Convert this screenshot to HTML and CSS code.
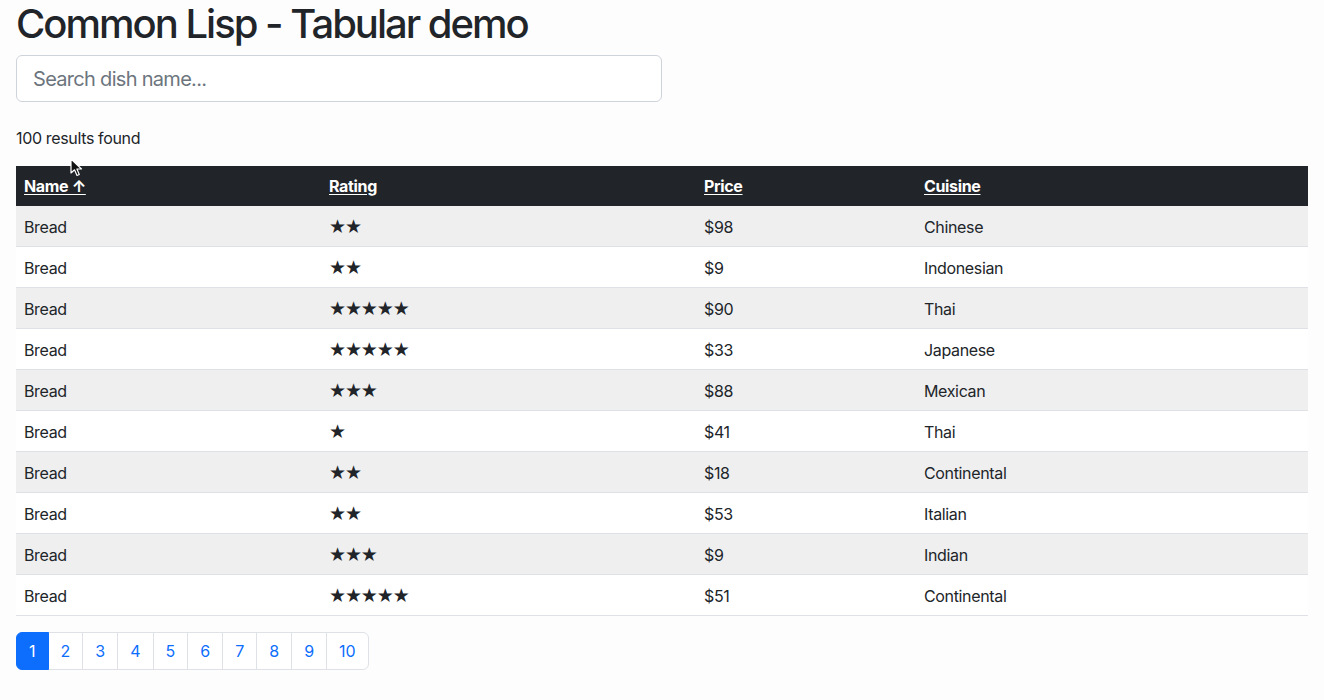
FILE: index.html
```html
<!DOCTYPE html>
<html lang="en">
<head>
<meta charset="utf-8">
<title>Common Lisp - Tabular demo</title>
<link rel="stylesheet" href="styles.css">
</head>
<body>
<div class="container">
  <h1 class="title">Common Lisp - Tabular demo</h1>
  <div class="search-row">
    <input class="search" type="text" placeholder="Search dish name...">
  </div>
  <p class="count">100 results found</p>
  <table class="table">
    <thead>
      <tr>
        <th class="c-name"><a href="#">Name ↑</a></th>
        <th class="c-rating"><a href="#">Rating</a></th>
        <th class="c-price"><a href="#">Price</a></th>
        <th class="c-cuisine"><a href="#">Cuisine</a></th>
      </tr>
    </thead>
    <tbody>
      <tr><td>Bread</td><td class="stars">★★</td><td>$98</td><td>Chinese</td></tr>
      <tr><td>Bread</td><td class="stars">★★</td><td>$9</td><td>Indonesian</td></tr>
      <tr><td>Bread</td><td class="stars">★★★★★</td><td>$90</td><td>Thai</td></tr>
      <tr><td>Bread</td><td class="stars">★★★★★</td><td>$33</td><td>Japanese</td></tr>
      <tr><td>Bread</td><td class="stars">★★★</td><td>$88</td><td>Mexican</td></tr>
      <tr><td>Bread</td><td class="stars">★</td><td>$41</td><td>Thai</td></tr>
      <tr><td>Bread</td><td class="stars">★★</td><td>$18</td><td>Continental</td></tr>
      <tr><td>Bread</td><td class="stars">★★</td><td>$53</td><td>Italian</td></tr>
      <tr><td>Bread</td><td class="stars">★★★</td><td>$9</td><td>Indian</td></tr>
      <tr><td>Bread</td><td class="stars">★★★★★</td><td>$51</td><td>Continental</td></tr>
    </tbody>
  </table>
  <ul class="pagination">
    <li class="page active"><a href="#">1</a></li>
    <li class="page"><a href="#">2</a></li>
    <li class="page"><a href="#">3</a></li>
    <li class="page"><a href="#">4</a></li>
    <li class="page"><a href="#">5</a></li>
    <li class="page"><a href="#">6</a></li>
    <li class="page"><a href="#">7</a></li>
    <li class="page"><a href="#">8</a></li>
    <li class="page"><a href="#">9</a></li>
    <li class="page"><a href="#">10</a></li>
  </ul>
</div>
<svg class="cursor" width="14" height="20" viewBox="0 0 14 20">
  <path d="M1 1 L1 15 L4.5 11.8 L7 17.5 L9.3 16.5 L6.9 11 L11.5 11 Z" fill="#111" stroke="#fff" stroke-width="1.2" stroke-linejoin="round"/>
</svg>
</body>
</html>
```
FILE: styles.css
```css
* { box-sizing: border-box; }
html, body { margin: 0; padding: 0; }
body {
  font-family: Inter, "Noto Sans", "Liberation Sans", sans-serif;
  font-size: 16px;
  line-height: 1.5;
  letter-spacing: -0.35px;
  color: #212529;
  background: #fdfdfe;
  position: relative;
}
.container { padding: 0 16px; }
.title {
  margin: 0 0 7px;
  font-size: 40px;
  font-weight: 500;
  line-height: 1.2;
  letter-spacing: -2px;
}
.search-row { width: 646px; }
.search {
  display: block;
  width: 100%;
  height: 47px;
  padding: 8px 16px;
  font-family: inherit;
  font-size: 20px;
  letter-spacing: -0.7px;
  color: #212529;
  background: #fff;
  border: 1px solid #ced4da;
  border-radius: 6px;
}
.search::placeholder { color: #6c757d; }
.count { margin: 24px 0 16px; }
.table {
  width: 100%;
  border-collapse: collapse;
  margin-bottom: 16px;
}
.table th, .table td {
  padding: 8px;
  text-align: left;
  vertical-align: middle;
  line-height: 24px;
}
.table thead th {
  background: #212529;
  color: #fff;
  font-weight: 700;
  height: 40px;
}
.table thead a { color: #fff; text-decoration: underline; text-underline-offset: 2px; }
.c-name { width: 305px; }
.c-rating { width: 375px; }
.c-price { width: 220px; }
.table tbody td {
  border-bottom: 1px solid #dee2e6;
  height: 40.8px;
  padding: 9px 8px 7px;
  background: #fff;
}
.table tbody tr:nth-child(odd) td { background: #efeff0; }
.table tbody td.stars {
  font-family: "DejaVu Sans", sans-serif;
  font-size: 19px;
  letter-spacing: -1.1px;
  padding-top: 8px;
  padding-bottom: 8px;
}
.pagination {
  display: flex;
  list-style: none;
  margin: 0;
  padding: 0;
}
.page a {
  display: block;
  padding: 6px 12px;
  height: 38px;
  color: #0d6efd;
  text-decoration: none;
  background: #fff;
  border: 1px solid #dee2e6;
  margin-left: -1px;
  letter-spacing: 0;
}
.page:first-child a { margin-left: 0; border-radius: 6px 0 0 6px; }
.page:last-child a { border-radius: 0 6px 6px 0; }
.page.active a { background: #0d6efd; border-color: #0d6efd; color: #fff; position: relative; }
.cursor { position: absolute; left: 70px; top: 158px; }
```
